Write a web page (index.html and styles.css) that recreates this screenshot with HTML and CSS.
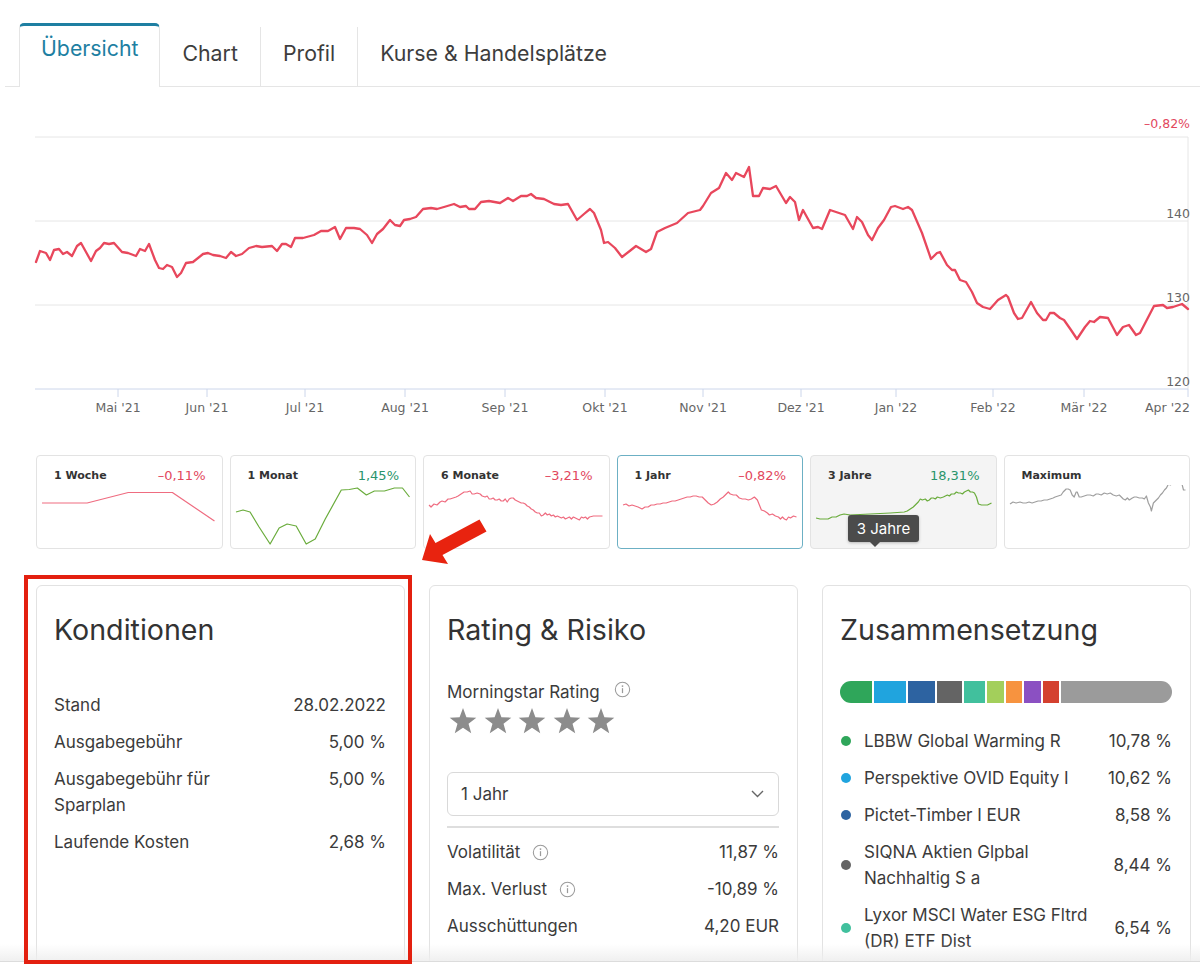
FILE: index.html
```html
<!DOCTYPE html>
<html lang="de">
<head>
<meta charset="utf-8">
<title>Übersicht</title>
<link rel="stylesheet" href="styles.css">
</head>
<body>
<svg class="defs" width="0" height="0" aria-hidden="true">
  <symbol id="star" viewBox="0 0 28 28">
    <polygon points="14,0 17.41,9.31 27.31,9.67 19.52,15.79 22.23,25.33 14,19.8 5.77,25.33 8.48,15.79 0.69,9.67 10.59,9.31"/>
  </symbol>
  <symbol id="info" viewBox="0 0 18 18">
    <circle cx="9" cy="9" r="7.6" fill="none" stroke="#9a9a9a" stroke-width="1.1"/>
    <circle cx="9" cy="5.4" r="0.95" fill="#9a9a9a"/>
    <path d="M9 7.6 V12.8" stroke="#9a9a9a" stroke-width="1.3" fill="none"/>
  </symbol>
</svg>

<div class="page">
  <nav class="tabs">
    <a class="tab active">Übersicht</a>
    <a class="tab sep">Chart</a>
    <a class="tab sep">Profil</a>
    <a class="tab">Kurse &amp; Handelsplätze</a>
  </nav>

  <section class="chart">
    <svg class="chart-svg" width="1200" height="330" viewBox="0 100 1200 330">
      <g class="grid">
        <line x1="35" y1="137" x2="1188" y2="137"/>
        <line x1="35" y1="221" x2="1188" y2="221"/>
        <line x1="35" y1="305" x2="1188" y2="305"/>
        <line x1="1188" y1="137" x2="1188" y2="389"/>
      </g>
      <line class="axis" x1="35" y1="389" x2="1188" y2="389"/>
      <g class="ticks">
        <line x1="118" y1="389" x2="118" y2="397"/>
        <line x1="207" y1="389" x2="207" y2="397"/>
        <line x1="305" y1="389" x2="305" y2="397"/>
        <line x1="405" y1="389" x2="405" y2="397"/>
        <line x1="505" y1="389" x2="505" y2="397"/>
        <line x1="605" y1="389" x2="605" y2="397"/>
        <line x1="703" y1="389" x2="703" y2="397"/>
        <line x1="801" y1="389" x2="801" y2="397"/>
        <line x1="896" y1="389" x2="896" y2="397"/>
        <line x1="993" y1="389" x2="993" y2="397"/>
        <line x1="1084" y1="389" x2="1084" y2="397"/>
        <line x1="1188" y1="389" x2="1188" y2="397"/>
      </g>
      <g class="xlabels">
        <text x="118" y="412">Mai '21</text>
        <text x="207" y="412">Jun '21</text>
        <text x="305" y="412">Jul '21</text>
        <text x="405" y="412">Aug '21</text>
        <text x="505" y="412">Sep '21</text>
        <text x="605" y="412">Okt '21</text>
        <text x="703" y="412">Nov '21</text>
        <text x="801" y="412">Dez '21</text>
        <text x="896" y="412">Jan '22</text>
        <text x="993" y="412">Feb '22</text>
        <text x="1084" y="412">Mär '22</text>
        <text class="end" x="1190" y="412">Apr '22</text>
      </g>
      <g class="ylabels">
        <text x="1190" y="218">140</text>
        <text x="1190" y="302">130</text>
        <text x="1190" y="386">120</text>
        <text class="neg" x="1190" y="128">–0,82%</text>
      </g>
      <polyline class="series" points="36,262 40,251 46,253 50,260 54,250 59,249 63,254 67,252 72,256 77,246 81,243 86,252 91,261 96,251 100,248 104,243 109,244 114,243 122,252 128,253 136,256 140,249 145,251 149,244 155,260 159,268 163,269 167,265 172,267 177,277 181,273 186,263 193,262 203,254 208,253 213,255 220,256 226,258 231,252 236,256 242,254 249,248 256,246 262,247 272,246 277,251 282,244 286,244 291,247 295,238 303,238 314,235 321,231 328,231 335,227 340,239 346,228 354,228 360,229 367,235 372,243 377,234 383,229 390,220 395,225 400,226 404,220 410,219 416,217 423,209 431,208 437,209 444,207 454,204 460,207 466,206 469,209 475,209 481,202 489,201 500,203 508,198 513,201 521,196 527,196 531,194 536,198 544,199 554,204 561,205 568,204 577,220 584,214 590,209 594,213 601,230 604,243 608,242 615,248 622,257 631,250 636,246 646,252 651,249 657,232 665,228 677,223 688,213 700,210 703,206 711,193 719,188 726,173 732,180 736,173 744,177 749,167 753,196 759,196 763,188 770,189 776,186 786,203 790,197 795,202 799,220 803,210 813,228 818,227 822,229 830,210 845,215 853,229 857,217 862,222 868,235 872,240 878,228 884,220 891,207 895,206 903,209 908,207 912,210 922,233 931,259 937,253 940,252 947,265 952,270 955,270 960,280 966,282 972,292 977,303 983,307 990,309 998,300 1006,295 1008,297 1014,313 1018,319 1022,318 1031,302 1037,313 1043,320 1046,320 1050,313 1054,313 1060,318 1064,320 1071,330 1077,339 1085,327 1090,321 1094,322 1100,317 1108,318 1117,335 1123,327 1129,325 1136,335 1140,333 1154,306 1163,305 1167,308 1173,307 1182,304 1188,309"/>
    </svg>
  </section>

  <div class="ranges">
    <div class="range">
      <div class="range-head"><span class="range-name">1 Woche</span><span class="range-val neg">–0,11%</span></div>
      <svg class="spark" viewBox="1 30 184 63" preserveAspectRatio="none"><polyline class="s-red" points="6,48 51,48 92,37.5 136,37.5 178,66"/></svg>
    </div>
    <div class="range">
      <div class="range-head"><span class="range-name">1 Monat</span><span class="range-val pos">1,45%</span></div>
      <svg class="spark" viewBox="1 30 184 63" preserveAspectRatio="none"><polyline class="s-green" points="6,57 13,55 20,57 29,72 40,89 49,73 57,69 66,71 76,89 85,84 95,64 111,35 119,34.5 127,33 136,40 144,36 154,36 164,33 172,33 179,42"/></svg>
    </div>
    <div class="range">
      <div class="range-head"><span class="range-name">6 Monate</span><span class="range-val neg">–3,21%</span></div>
      <svg class="spark" viewBox="1 30 184 63" preserveAspectRatio="none"><polyline class="s-red" points="6,50 8,52 11,49 14,50 17,47 19,46 22,47 25,44 27,44 30,43 33,42 35,41 38,39 41,37 44,37 47,36 49,39 51,39 54,38 57,39 59,41 62,42 64,41 66,44 68,44 70,43 72,45 74,45 76,44 78,46 80,46 82,44 84,47 86,44 88,43 90,43 92,45 94,46 96,47 98,48 100,48 102,49 104,51 106,52 108,54 110,55 112,57 114,58 116,58 118,61 120,60 122,58 124,60 126,59 128,61 130,60 132,62 134,61 136,62 138,63 140,62 142,64 144,63 146,62 148,64 150,62 152,63 154,64 156,65 158,62 160,63 162,62 164,64 166,62 170,61 174,61 179,61"/></svg>
    </div>
    <div class="range selected">
      <div class="range-head"><span class="range-name">1 Jahr</span><span class="range-val neg">–0,82%</span></div>
      <svg class="spark" viewBox="1 30 184 63" preserveAspectRatio="none"><polyline class="s-red" points="6,50 9,49 12,51 15,50 18,51 21,52 25,54 28,52 31,52 34,50 37,50 40,49 43,49 46,48 49,48 52,47 55,46 58,46 61,45 64,44 67,43 70,42 73,42 76,41 79,41 82,42 85,42 88,45 91,48 94,50 97,49 100,47 103,44 106,42 109,39 111,37 113,39 116,40 119,40 122,43 125,44 128,44 131,45 134,44 137,42 140,45 142,50 144,55 147,56 150,58 152,60 155,59 158,61 161,62 163,64 165,62 167,64 169,65 171,62 173,63 176,61 179,62"/></svg>
    </div>
    <div class="range hover">
      <div class="range-head"><span class="range-name">3 Jahre</span><span class="range-val pos">18,31%</span></div>
      <svg class="spark" viewBox="1 30 184 63" preserveAspectRatio="none"><polyline class="s-green" points="6,63 10,64 14,64 18,64 22,62 26,62 30,60 34,59 40,60 60,59 80,58 94,57 97,56 100,54 103,52 106,49 108,47 110,44 112,45 115,44 117,46 119,45 121,43 123,43 125,44 127,42 130,43 133,42 135,41 137,40 139,41 141,39 144,39 146,37 148,38 150,38 152,39 154,37 156,36 158,35 160,37 162,37 164,38 166,42 168,49 171,50 174,50 177,50 181,48"/></svg>
      <div class="tip">3 Jahre</div>
    </div>
    <div class="range">
      <div class="range-head"><span class="range-name">Maximum</span></div>
      <svg class="spark" viewBox="1 30 184 63" preserveAspectRatio="none"><polyline class="s-gray" points="6,49 9,47 12,48 16,47 19,48 22,48 25,47 28,48 31,47 34,46 37,46 40,45 43,45 46,44 49,43 51,42 54,41 57,40 59,37 62,34 64,34 66,35 68,40 70,42 72,37 73,37 75,42 77,42 80,41 83,40 86,40 89,41 92,39 94,39 97,40 100,38 103,39 106,38 109,40 112,41 115,40 117,42 119,44 121,45 123,43 125,45 128,43 130,42 132,42 135,43 138,43 140,44 142,41 144,48 146,52 147,56 149,48 150,47 152,45 154,43 156,40 158,38 160,35 162,33 164,29 166,30 168,28 170,27 172,28 174,26 176,27 177,27 179,35 181,35"/></svg>
    </div>
  </div>

  <div class="panels">
    <div class="panel-wrap">
      <section class="card">
        <h2 class="card-title">Konditionen</h2>
        <dl class="kv kv-cond">
          <div class="kv-row"><dt>Stand</dt><dd>28.02.2022</dd></div>
          <div class="kv-row"><dt>Ausgabegebühr</dt><dd>5,00 %</dd></div>
          <div class="kv-row"><dt>Ausgabegebühr für Sparplan</dt><dd>5,00 %</dd></div>
          <div class="kv-row"><dt>Laufende Kosten</dt><dd>2,68 %</dd></div>
        </dl>
      </section>
      <div class="highlight"></div>
    </div>

    <section class="card">
      <h2 class="card-title">Rating &amp; Risiko</h2>
      <div class="ms-label">Morningstar Rating <svg class="info info-ms"><use href="#info"/></svg></div>
      <div class="stars">
        <svg class="star"><use href="#star"/></svg>
        <svg class="star"><use href="#star"/></svg>
        <svg class="star"><use href="#star"/></svg>
        <svg class="star"><use href="#star"/></svg>
        <svg class="star"><use href="#star"/></svg>
      </div>
      <div class="select">
        <span>1 Jahr</span>
        <svg class="chev" width="13" height="8" viewBox="0 0 13 8"><polyline points="1,1 6.5,6.5 12,1"/></svg>
      </div>
      <div class="divider"></div>
      <dl class="kv kv-risk">
        <div class="kv-row"><dt>Volatilität <svg class="info"><use href="#info"/></svg></dt><dd>11,87 %</dd></div>
        <div class="kv-row"><dt>Max. Verlust <svg class="info"><use href="#info"/></svg></dt><dd>-10,89 %</dd></div>
        <div class="kv-row"><dt>Ausschüttungen</dt><dd>4,20 EUR</dd></div>
      </dl>
    </section>

    <section class="card">
      <h2 class="card-title">Zusammensetzung</h2>
      <div class="bar">
        <span class="seg c1" style="flex-basis:32px"></span>
        <span class="seg c2" style="flex-basis:32px"></span>
        <span class="seg c3" style="flex-basis:27px"></span>
        <span class="seg c4" style="flex-basis:25px"></span>
        <span class="seg c5" style="flex-basis:21px"></span>
        <span class="seg c6" style="flex-basis:17px"></span>
        <span class="seg c7" style="flex-basis:16px"></span>
        <span class="seg c8" style="flex-basis:17px"></span>
        <span class="seg c9" style="flex-basis:16px"></span>
        <span class="seg c10 rest"></span>
      </div>
      <ul class="legend">
        <li><span class="dot c1"></span><span class="lg-name">LBBW Global Warming R</span><span class="lg-val">10,78 %</span></li>
        <li><span class="dot c2"></span><span class="lg-name">Perspektive OVID Equity I</span><span class="lg-val">10,62 %</span></li>
        <li><span class="dot c3"></span><span class="lg-name">Pictet-Timber I EUR</span><span class="lg-val">8,58 %</span></li>
        <li><span class="dot c4"></span><span class="lg-name">SIQNA Aktien Glpbal Nachhaltig S a</span><span class="lg-val">8,44 %</span></li>
        <li><span class="dot c5"></span><span class="lg-name">Lyxor MSCI Water ESG Fltrd (DR) ETF Dist</span><span class="lg-val">6,54 %</span></li>
      </ul>
    </section>
  </div>
</div>

<svg class="arrow" width="80" height="60" viewBox="415 512 80 60" aria-hidden="true">
  <polygon points="422,560 430,534 435.5,543 479.5,519.5 486.5,531.5 442.5,555 448,564"/>
</svg>
<div class="bottom-fade"></div>
</body>
</html>
```

FILE: styles.css
```css
html, body {
  margin: 0;
  padding: 0;
  overflow: hidden;
  background: #fff;
}

body {
  font-family: "Inter", "Open Sans", sans-serif;
  color: #3b3b3b;
  width: 1200px;
  height: 966px;
  position: relative;
}

.defs {
  position: absolute;
  width: 0;
  height: 0;
}

/* ---------- Tabs ---------- */
.tabs {
  display: flex;
  align-items: flex-end;
  margin: 23px 0 0 5px;
  padding-left: 14px;
  height: 63px;
  border-bottom: 1px solid #e5e5e5;
}

.tab {
  box-sizing: border-box;
  height: 59px;
  padding: 13px 22px 0;
  font-size: 21.3px;
  line-height: 26px;
  color: #3d3d3d;
}

.tab.sep {
  border-right: 1px solid #e5e5e5;
}

.tab.active {
  height: 64px;
  margin-bottom: -1px;
  padding: 9px 21px 0;
  background: #fff;
  color: #1e7fa2;
  border: 1px solid #e5e5e5;
  border-top: 3px solid #1e7fa2;
  border-bottom: none;
  border-radius: 5px 5px 0 0;
}

/* ---------- Main chart ---------- */
.chart {
  margin-top: 13px;
  height: 330px;
}

.chart-svg {
  display: block;
}

.grid line {
  stroke: #e6e6e6;
  stroke-width: 1;
}

.axis,
.ticks line {
  stroke: #ccd6eb;
  stroke-width: 1;
}

.xlabels text,
.ylabels text {
  font-family: "DejaVu Sans", "Verdana", sans-serif;
  font-size: 12.5px;
  fill: #666;
}

.xlabels text {
  text-anchor: middle;
}

.xlabels text.end {
  text-anchor: end;
}

.ylabels text {
  text-anchor: end;
}

.ylabels text.neg {
  fill: #e2475d;
}

.series {
  fill: none;
  stroke: #e8475c;
  stroke-width: 2.3;
  stroke-linejoin: round;
  stroke-linecap: round;
}

/* ---------- Range cards ---------- */
.ranges {
  display: grid;
  grid-template-columns: repeat(6, 1fr);
  gap: 7px;
  width: 1154px;
  margin: 25px 0 0 36px;
}

.range {
  position: relative;
  box-sizing: border-box;
  height: 94px;
  border: 1px solid #e3e3e3;
  border-radius: 4px;
  background: #fff;
}

.range.selected {
  border-color: #6cb0c4;
}

.range.hover {
  background: #f4f4f4;
}

.range-head {
  display: flex;
  justify-content: space-between;
  align-items: center;
  height: 29px;
  box-sizing: border-box;
  padding: 10px 16px 0 17px;
  line-height: 18px;
}

.range-name {
  font-family: "DejaVu Sans", "Verdana", sans-serif;
  font-weight: bold;
  font-size: 11px;
  color: #333;
}

.range-val {
  font-family: "DejaVu Sans", "Verdana", sans-serif;
  font-size: 13px;
}

.neg {
  color: #e2475d;
}

.pos {
  color: #2a946b;
}

.spark {
  display: block;
  width: 100%;
  height: 63px;
}

.spark polyline {
  fill: none;
  stroke-width: 1.2;
  stroke-linejoin: round;
}

.s-red { stroke: #ef6c80; }
.s-green { stroke: #6aac3c; }
.s-gray { stroke: #9f9f9f; }

.tip {
  position: absolute;
  left: 37px;
  top: 59px;
  width: 71px;
  height: 27px;
  box-sizing: border-box;
  background: #4b4b4b;
  color: #fff;
  font-size: 15px;
  line-height: 27px;
  text-align: center;
  border-radius: 3px;
  box-shadow: 0 1px 3px rgba(0, 0, 0, 0.25);
}

.tip::after {
  content: "";
  position: absolute;
  left: 22px;
  bottom: -5px;
  border-left: 5px solid transparent;
  border-right: 5px solid transparent;
  border-top: 5px solid #4b4b4b;
}

/* ---------- Panels ---------- */
.panels {
  display: grid;
  grid-template-columns: repeat(3, 369px);
  gap: 24px;
  margin: 36px 0 0 36px;
}

.panel-wrap {
  position: relative;
}

.card {
  box-sizing: border-box;
  height: 420px;
  padding: 27px 18px 0 17px;
  border: 1px solid #e2e2e2;
  border-radius: 6px;
  background: #fff;
}

.card-title {
  margin: 0;
  font-size: 28.6px;
  line-height: 34px;
  font-weight: 400;
  color: #333;
}

.highlight {
  position: absolute;
  left: -12px;
  top: -10px;
  width: 388px;
  height: 389px;
  box-sizing: border-box;
  border: 4px solid #e3200f;
  z-index: 5;
}

.kv {
  margin: 0;
  display: flex;
  flex-direction: column;
  gap: 11px;
}

.kv-cond {
  margin-top: 45px;
}

.kv-row {
  display: flex;
  justify-content: space-between;
  align-items: flex-start;
  font-size: 17px;
  line-height: 26px;
}

.kv-row dt {
  max-width: 200px;
  display: flex;
  align-items: center;
}

.kv-row dd {
  margin: 0;
  text-align: right;
}

.info {
  width: 17px;
  height: 17px;
  display: inline-block;
  margin-left: 12px;
}

.info-ms {
  margin-left: 14px;
  position: relative;
  top: -3px;
}

.ms-label {
  margin-top: 32px;
  font-size: 17px;
  line-height: 26px;
  display: flex;
  align-items: center;
}

.stars {
  display: flex;
  gap: 6.5px;
  margin-top: 3px;
  padding-left: 2px;
  height: 28px;
}

.star {
  width: 28px;
  height: 28px;
  fill: #8c8c8c;
}

.select {
  margin-top: 36px;
  box-sizing: border-box;
  height: 44px;
  border: 1px solid #d9d9d9;
  border-radius: 6px;
  display: flex;
  align-items: center;
  justify-content: space-between;
  padding: 0 14px 0 13px;
  font-size: 17px;
}

.chev polyline {
  fill: none;
  stroke: #666;
  stroke-width: 1.4;
}

.divider {
  margin-top: 10px;
  height: 2px;
  background: #dedede;
}

.kv-risk {
  margin-top: 11px;
}

/* ---------- Composition ---------- */
.bar {
  margin-top: 34px;
  height: 22px;
  display: flex;
  gap: 2px;
  border-radius: 11px;
  overflow: hidden;
}

.seg {
  flex-grow: 0;
  flex-shrink: 0;
  height: 100%;
}

.seg.rest {
  flex: 1 1 auto;
}

.c1 { background: #2fa65a; }
.c2 { background: #20a4de; }
.c3 { background: #2d63a1; }
.c4 { background: #646464; }
.c5 { background: #41c09d; }
.c6 { background: #a3cf5b; }
.c7 { background: #f7933f; }
.c8 { background: #8b50c2; }
.c9 { background: #d4412f; }
.c10 { background: #9b9b9b; }

.legend {
  list-style: none;
  margin: 25px 0 0;
  padding: 0;
  display: flex;
  flex-direction: column;
  gap: 11px;
}

.legend li {
  display: flex;
  align-items: center;
  font-size: 17px;
  line-height: 26px;
}

.dot {
  flex: 0 0 10px;
  height: 10px;
  border-radius: 50%;
  margin: 0 13px 0 1px;
}

.lg-name {
  max-width: 230px;
}

.lg-val {
  margin-left: auto;
  white-space: nowrap;
}

/* ---------- Overlays ---------- */
.arrow {
  position: absolute;
  left: 415px;
  top: 512px;
}

.arrow polygon {
  fill: #e8230f;
}

.bottom-fade {
  position: absolute;
  left: 0;
  right: 0;
  bottom: 0;
  height: 22px;
  background: linear-gradient(to bottom, rgba(238, 238, 238, 0) 0, rgba(238, 238, 238, 0.9) 17px, #dcdcdc 17px, #dcdcdc 18px, #fff 18px);
  z-index: 3;
}
```
